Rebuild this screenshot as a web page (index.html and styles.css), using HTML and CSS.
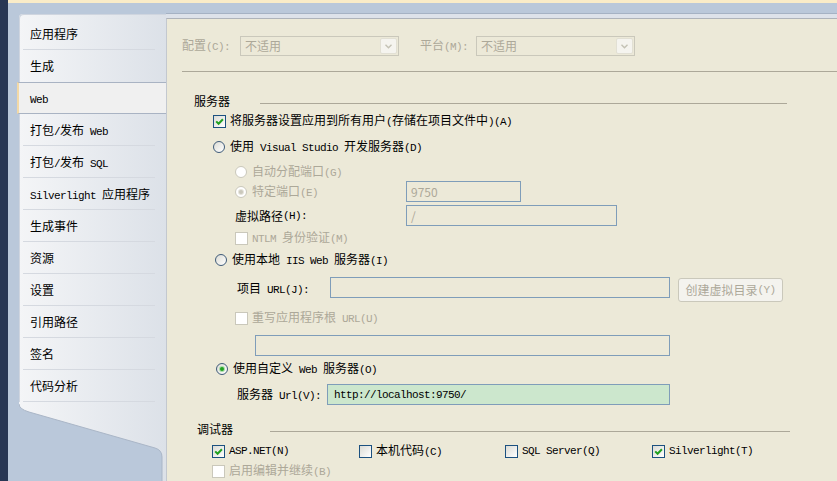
FILE: index.html
```html
<!DOCTYPE html>
<html lang="zh-CN">
<head>
    <meta charset="UTF-8">
    <title>Web 属性</title>
    <link rel="stylesheet" href="styles.css">
</head>
<body>
<div class="window">
    <div class="edge"></div>
    <div class="workspace">
        <div class="doc-strip"></div>
        <div class="designer">
            <!-- property page tabs -->
            <div class="nav">
                <ul class="tabs">
                    <li>应用程序</li>
                    <li>生成</li>
                    <li class="active"><span class="en">Web</span></li>
                    <li>打包<span class="en">/</span>发布<span class="en"> Web</span></li>
                    <li>打包<span class="en">/</span>发布<span class="en"> SQL</span></li>
                    <li><span class="en">Silverlight </span>应用程序</li>
                    <li>生成事件</li>
                    <li>资源</li>
                    <li>设置</li>
                    <li>引用路径</li>
                    <li>签名</li>
                    <li>代码分析</li>
                </ul>
                <svg class="tabs-tail" width="147" height="79" viewBox="0 0 147 79">
                    <defs>
                        <linearGradient id="tabFill" x1="0" x2="1" y1="0" y2="0">
                            <stop offset="0" stop-color="#f4f5f7"/>
                            <stop offset="1" stop-color="#dce1e8"/>
                        </linearGradient>
                    </defs>
                    <path d="M0 0 H147 V79 H143 V55 Q143 48 136 46 L10 10 Q0 7 0 2 Z" fill="url(#tabFill)"/>
                    <path d="M0 2 Q0 7 10 10 L136 46 Q143 48 143 55 V79" fill="none" stroke="#aab6c7" stroke-width="1"/>
                </svg>
            </div>

            <!-- Web page of the project properties -->
            <div class="panel">
                <div class="sheet">
                    <div class="toolbar">
                        <span class="tb-label">配置<span class="en">(C):</span></span>
                        <div class="combo">
                            <span>不适用</span>
                            <i class="combo-btn"><svg width="7" height="5" viewBox="0 0 7 5"><path d="M0.5 0.8 L3.5 3.8 L6.5 0.8" fill="none" stroke="#c4c2b4" stroke-width="1.4"/></svg></i>
                        </div>
                        <span class="tb-label tb-second">平台<span class="en">(M):</span></span>
                        <div class="combo">
                            <span>不适用</span>
                            <i class="combo-btn"><svg width="7" height="5" viewBox="0 0 7 5"><path d="M0.5 0.8 L3.5 3.8 L6.5 0.8" fill="none" stroke="#c4c2b4" stroke-width="1.4"/></svg></i>
                        </div>
                    </div>
                    <div class="rule"></div>

                    <section class="group server-group">
                        <div class="group-title"><span>服务器</span><i class="group-line"></i></div>

                        <div class="row in-a mt5">
                            <span class="chk"><svg width="9" height="9" viewBox="0 0 9 9"><path d="M1.2 4.4 L3.6 6.8 L7.9 2.2" fill="none" stroke="#21a121" stroke-width="2"/></svg></span>
                            <span>将服务器设置应用到所有用户<span class="en">(</span>存储在项目文件中<span class="en">)(A)</span></span>
                        </div>
                        <div class="row in-a mt10">
                            <span class="radio"></span>
                            <span>使用<span class="en"> Visual Studio </span>开发服务器<span class="en">(D)</span></span>
                        </div>
                        <div class="row in-b mt9 off">
                            <span class="radio"></span>
                            <span>自动分配端口<span class="en">(G)</span></span>
                        </div>
                        <div class="row field-row in-b mt1">
                            <span class="lead off"><span class="radio on"></span><span>特定端口<span class="en">(E)</span></span></span>
                            <span class="field port off">9750</span>
                        </div>
                        <div class="row field-row in-b mt3">
                            <span class="lead">虚拟路径<span class="en">(H):</span></span>
                            <span class="field vpath off">/</span>
                        </div>
                        <div class="row in-b mt4 off">
                            <span class="chk"></span>
                            <span><span class="en">NTLM </span>身份验证<span class="en">(M)</span></span>
                        </div>
                        <div class="row in-e mt6">
                            <span class="radio"></span>
                            <span>使用本地<span class="en"> IIS Web </span>服务器<span class="en">(I)</span></span>
                        </div>
                        <div class="row url-row in-c mt9">
                            <span class="lead-url">项目<span class="en"> URL(J):</span></span>
                            <span class="field proj"></span>
                            <span class="btn">创建虚拟目录<span class="en">(Y)</span></span>
                        </div>
                        <div class="row in-b mt8 off">
                            <span class="chk"></span>
                            <span>重写应用程序根<span class="en"> URL(U)</span></span>
                        </div>
                        <div class="row field-row in-d mt9">
                            <span class="field root"></span>
                        </div>
                        <div class="row in-f mt5">
                            <span class="radio on"></span>
                            <span>使用自定义<span class="en"> Web </span>服务器<span class="en">(O)</span></span>
                        </div>
                        <div class="row field-row in-c mt7">
                            <span class="lead-srv">服务器<span class="en"> Url(V):</span></span>
                            <span class="field srv"><span class="en">http://localhost:9750/</span></span>
                        </div>
                    </section>

                    <section class="group debug-group">
                        <div class="group-title"><span>调试器</span><i class="group-line"></i></div>

                        <div class="row opts mt7">
                            <span class="opt">
                                <span class="chk"><svg width="9" height="9" viewBox="0 0 9 9"><path d="M1.2 4.4 L3.6 6.8 L7.9 2.2" fill="none" stroke="#21a121" stroke-width="2"/></svg></span>
                                <span class="en">ASP.NET(N)</span>
                            </span>
                            <span class="opt">
                                <span class="chk"></span>
                                <span>本机代码<span class="en">(C)</span></span>
                            </span>
                            <span class="opt">
                                <span class="chk"></span>
                                <span class="en">SQL Server(Q)</span>
                            </span>
                            <span class="opt">
                                <span class="chk"><svg width="9" height="9" viewBox="0 0 9 9"><path d="M1.2 4.4 L3.6 6.8 L7.9 2.2" fill="none" stroke="#21a121" stroke-width="2"/></svg></span>
                                <span class="en">Silverlight(T)</span>
                            </span>
                        </div>
                        <div class="row opts mt4 off">
                            <span class="chk"></span>
                            <span>启用编辑并继续<span class="en">(B)</span></span>
                        </div>
                    </section>
                </div>
            </div>
        </div>
    </div>
</div>
</body>
</html>
```

FILE: styles.css
```css
/* Project properties designer, XP look */
body {
    margin: 0;
    width: 837px;
    height: 481px;
    overflow: hidden;
    font-family: "Noto Sans CJK SC", sans-serif;
    font-size: 12px;
    line-height: 16px;
    color: #000;
    background: #bac8da;
}
/* half-width latin runs: 6px per character */
.en {
    font-family: "Liberation Mono", monospace;
    font-size: 11px;
    letter-spacing: -0.6px;
}
.window {
    display: flex;
    height: 481px;
}
.edge {
    flex: none;
    width: 8px;
    background: #283754;
}
.workspace {
    flex: 1;
    display: flex;
    flex-direction: column;
}
.doc-strip {
    height: 3px;
    background: #faecc8;
}
.designer {
    flex: 1;
    display: flex;
    min-height: 0;
}

/* left tab list */
.nav {
    flex: none;
    width: 158px;
    padding: 11px 0 0 11px;
    box-sizing: border-box;
    display: flex;
    flex-direction: column;
}
.tabs {
    list-style: none;
    margin: 0;
    padding: 4px 0 0;
    background: linear-gradient(to right, #f4f5f7, #dce1e8);
    border-top-left-radius: 4px;
    box-shadow: inset 1px 1px 0 #cfd5df;
}
.tabs li {
    position: relative;
    height: 32px;
    line-height: 32px;
    padding-left: 11px;
    white-space: nowrap;
}
.tabs li::after {
    content: "";
    position: absolute;
    left: 4px;
    right: 11px;
    bottom: 0;
    height: 1px;
    background: #d5d9e0;
}
.tabs li.active {
    height: 30px;
    line-height: 30px;
    margin-left: -2px;
    border-left: 2px solid #f3d9a6;
    border-top: 1px solid #a9b3c3;
    border-bottom: 1px solid #a9b3c3;
    background: #f0f0f0;
}
.tabs li.active::after,
.tabs li:has(+ .active)::after {
    display: none;
}
.tabs-tail {
    display: block;
}

/* right page */
.panel {
    flex: 1;
    display: flex;
    flex-direction: column;
    margin-top: 10px;
    border-top: 1px solid #a5b2c4;
    padding-top: 4px;
    background: #dde2ea;
}
.sheet {
    flex: 1;
    background: #ece9d8;
    border-top: 1px solid #aeb3ba;
    border-left: 1px solid #c3c8cf;
    padding: 17px 0 0 15px;
}
.toolbar {
    display: flex;
    align-items: center;
    height: 20px;
}
.tb-label {
    width: 58px;
    color: #aca899;
}
.tb-second {
    width: 56px;
    margin-left: 21px;
}
.combo {
    width: 159px;
    height: 20px;
    box-sizing: border-box;
    border: 1px solid #cac8bb;
    display: flex;
    align-items: center;
    padding-left: 4px;
    color: #aca899;
}
.combo-btn {
    margin-left: auto;
    margin-right: 1px;
    width: 17px;
    height: 16px;
    box-sizing: border-box;
    border: 1px solid #e2e0d4;
    border-radius: 2px;
    background: #f5f4ef;
    display: flex;
    align-items: center;
    justify-content: center;
}
.rule {
    height: 1px;
    margin-top: 15px;
    background: #aca899;
}

/* groups */
.group {
    width: 593px;
}
.server-group {
    margin: 22px 0 0 12px;
}
.debug-group {
    margin: 17px 0 0 15px;
}
.group-title {
    display: flex;
    align-items: center;
    height: 14px;
}
.group-line {
    flex: 1;
    height: 1px;
    margin: 4px 0 0 30px;
    background: #aca899;
}
.debug-group .group-line {
    margin-left: 37px;
}

.row {
    display: flex;
    align-items: center;
    height: 16px;
    white-space: nowrap;
}
.field-row {
    height: 21px;
}
.url-row {
    height: 25px;
    align-items: flex-start;
}
.off {
    color: #aca899;
}

.in-a { padding-left: 19px; }
.in-b { padding-left: 41px; }
.in-c { padding-left: 43px; }
.in-d { padding-left: 61px; }
.in-e { padding-left: 21px; }
.in-f { padding-left: 22px; }

.mt1 { margin-top: 1px; }
.mt3 { margin-top: 3px; }
.mt4 { margin-top: 4px; }
.mt5 { margin-top: 5px; }
.mt6 { margin-top: 6px; }
.mt7 { margin-top: 7px; }
.mt8 { margin-top: 8px; }
.mt9 { margin-top: 9px; }
.mt10 { margin-top: 10px; }

/* check boxes and radio buttons */
.chk {
    flex: none;
    width: 13px;
    height: 13px;
    box-sizing: border-box;
    margin-right: 4px;
    border: 1px solid #1c5180;
    background: linear-gradient(135deg, #dcdcd5, #ffffff);
    display: flex;
    align-items: center;
    justify-content: center;
}
.radio {
    flex: none;
    width: 12px;
    height: 12px;
    box-sizing: border-box;
    margin-right: 5px;
    border: 1px solid #3f5b79;
    border-radius: 50%;
    background: linear-gradient(135deg, #dcdcd5, #ffffff);
    display: flex;
    align-items: center;
    justify-content: center;
}
.radio.on::before {
    content: "";
    width: 4px;
    height: 4px;
    border-radius: 50%;
    background: #21a121;
    box-shadow: 0 0 0 1px #a8dca8;
}
.off .chk,
.off .radio {
    border-color: #cac8bb;
    background: #fff;
}
.off .radio.on::before {
    background: #cac8bb;
    box-shadow: 0 0 0 1px #e6e4dc;
}

/* text fields and buttons */
.lead {
    width: 171px;
    display: flex;
    align-items: center;
}
.lead-url {
    width: 93px;
    line-height: 21px;
}
.lead-srv {
    width: 90px;
}
.field {
    flex: none;
    height: 21px;
    box-sizing: border-box;
    border: 1px solid #7f9db9;
    padding-left: 4px;
    display: flex;
    align-items: center;
}
.port { width: 115px; }
.vpath { width: 211px; }
.proj { width: 340px; }
.root { width: 415px; }
.srv {
    width: 343px;
    padding-left: 6px;
    background: #cce7cd;
}
.btn {
    flex: none;
    width: 105px;
    height: 24px;
    box-sizing: border-box;
    margin: 1px 0 0 8px;
    border: 1px solid #cac8bb;
    border-radius: 3px;
    background: #f4f3ee;
    color: #aca899;
    display: flex;
    align-items: center;
    justify-content: center;
}

.opts {
    padding-left: 15px;
}
.opt {
    flex: none;
    width: 147px;
    display: flex;
    align-items: center;
}
.opt:nth-child(2) {
    width: 146px;
}
```
